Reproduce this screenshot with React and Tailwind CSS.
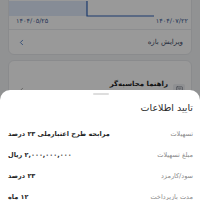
import { ChevronLeft, Calculator } from 'lucide-react';

const rows = [
  { label: 'تسهیلات', value: 'مرابحه طرح اعتبارملی ۲۳ درصد' },
  { label: 'مبلغ تسهیلات', value: '۲,۰۰۰,۰۰۰,۰۰۰ ریال' },
  { label: 'سود/کارمزد', value: '۲۳ درصد' },
  { label: 'مدت بازپرداخت', value: '۱۲ ماه' },
];

const App = () => {
  return (
    <div
      dir="rtl"
      className="relative w-[200px] h-[200px] overflow-hidden bg-[#f2f3f5]"
      style={{ fontFamily: '"DejaVu Sans", sans-serif' }}
    >
      {/* Range card (scrolled, top hidden) */}
      <div className="mx-[8px] -mt-[10px] bg-white rounded-[6px] border border-[#e6e8ec]">
        <div className="pt-[10px]">
          <svg width="184" height="17" viewBox="0 0 184 17" className="block" dir="ltr">
            <rect x="2" y="0" width="78" height="15" fill="#dfe9fb" />
            <path d="M80 0 V15 H147" fill="none" stroke="#2f63b5" strokeWidth="1.2" />
          </svg>
        </div>
        <div className="flex justify-between items-center pl-[7px] pr-[3px] h-[8px] text-[6.5px] text-[#3c5a93]">
          <span>۱۴۰۴/۰۷/۲۲</span>
          <span>۱۴۰۴/۰۵/۲۵</span>
        </div>
        <div className="mt-[3px] border-t border-[#e9ebef]" />
        <div className="flex items-center justify-between h-[24px] pr-[8px] pl-[8px]">
          <span className="text-[7px] text-[#3b4a66]">ویرایش بازه</span>
          <ChevronLeft size={9} strokeWidth={2} className="text-[#2f63b5]" />
        </div>
      </div>

      {/* Calculator guide card */}
      <div className="mx-[8px] mt-[5px] bg-white rounded-[6px] border border-[#e6e8ec] flex items-center gap-[5px] h-[60px] pr-[6px] pl-[8px]">
        <div className="w-[12px] h-[12px] rounded-[2px] bg-[#eef0f3] flex items-center justify-center">
          <Calculator size={9} strokeWidth={1.6} className="text-[#6b7280]" />
        </div>
        <div className="flex-1 flex flex-col gap-[2px]">
          <span className="text-[7px] font-bold text-[#222]">راهنما محاسبه‌گر</span>
          <span className="text-[6px] text-[#777]">محاسبه اقساط و سود تسهیلات</span>
        </div>
        <ChevronLeft size={9} strokeWidth={1.6} className="text-[#777]" />
      </div>

      {/* Scrim */}
      <div className="absolute inset-0 bg-black/40" />

      {/* Bottom sheet */}
      <div className="absolute left-0 right-0 top-[90px] bottom-0 bg-white rounded-t-[10px] pr-[7px] pl-[8px]">
        <div className="flex justify-center pt-[3px]">
          <div className="w-[16px] h-[2px] rounded-full bg-[#dedede]" />
        </div>
        <div className="mt-[6px] text-[9.5px] text-[#2a2a2a]">تایید اطلاعات</div>
        <div className="mt-[9px] flex flex-col">
          {rows.map((r) => (
            <div key={r.label} className="flex items-center justify-between h-[21px]">
              <span className="text-[6.5px] text-[#8a8a8a]">{r.label}</span>
              <span className="text-[6.5px] font-bold text-[#1f1f1f]">{r.value}</span>
            </div>
          ))}
        </div>
      </div>
    </div>
  );
};

export default App;
